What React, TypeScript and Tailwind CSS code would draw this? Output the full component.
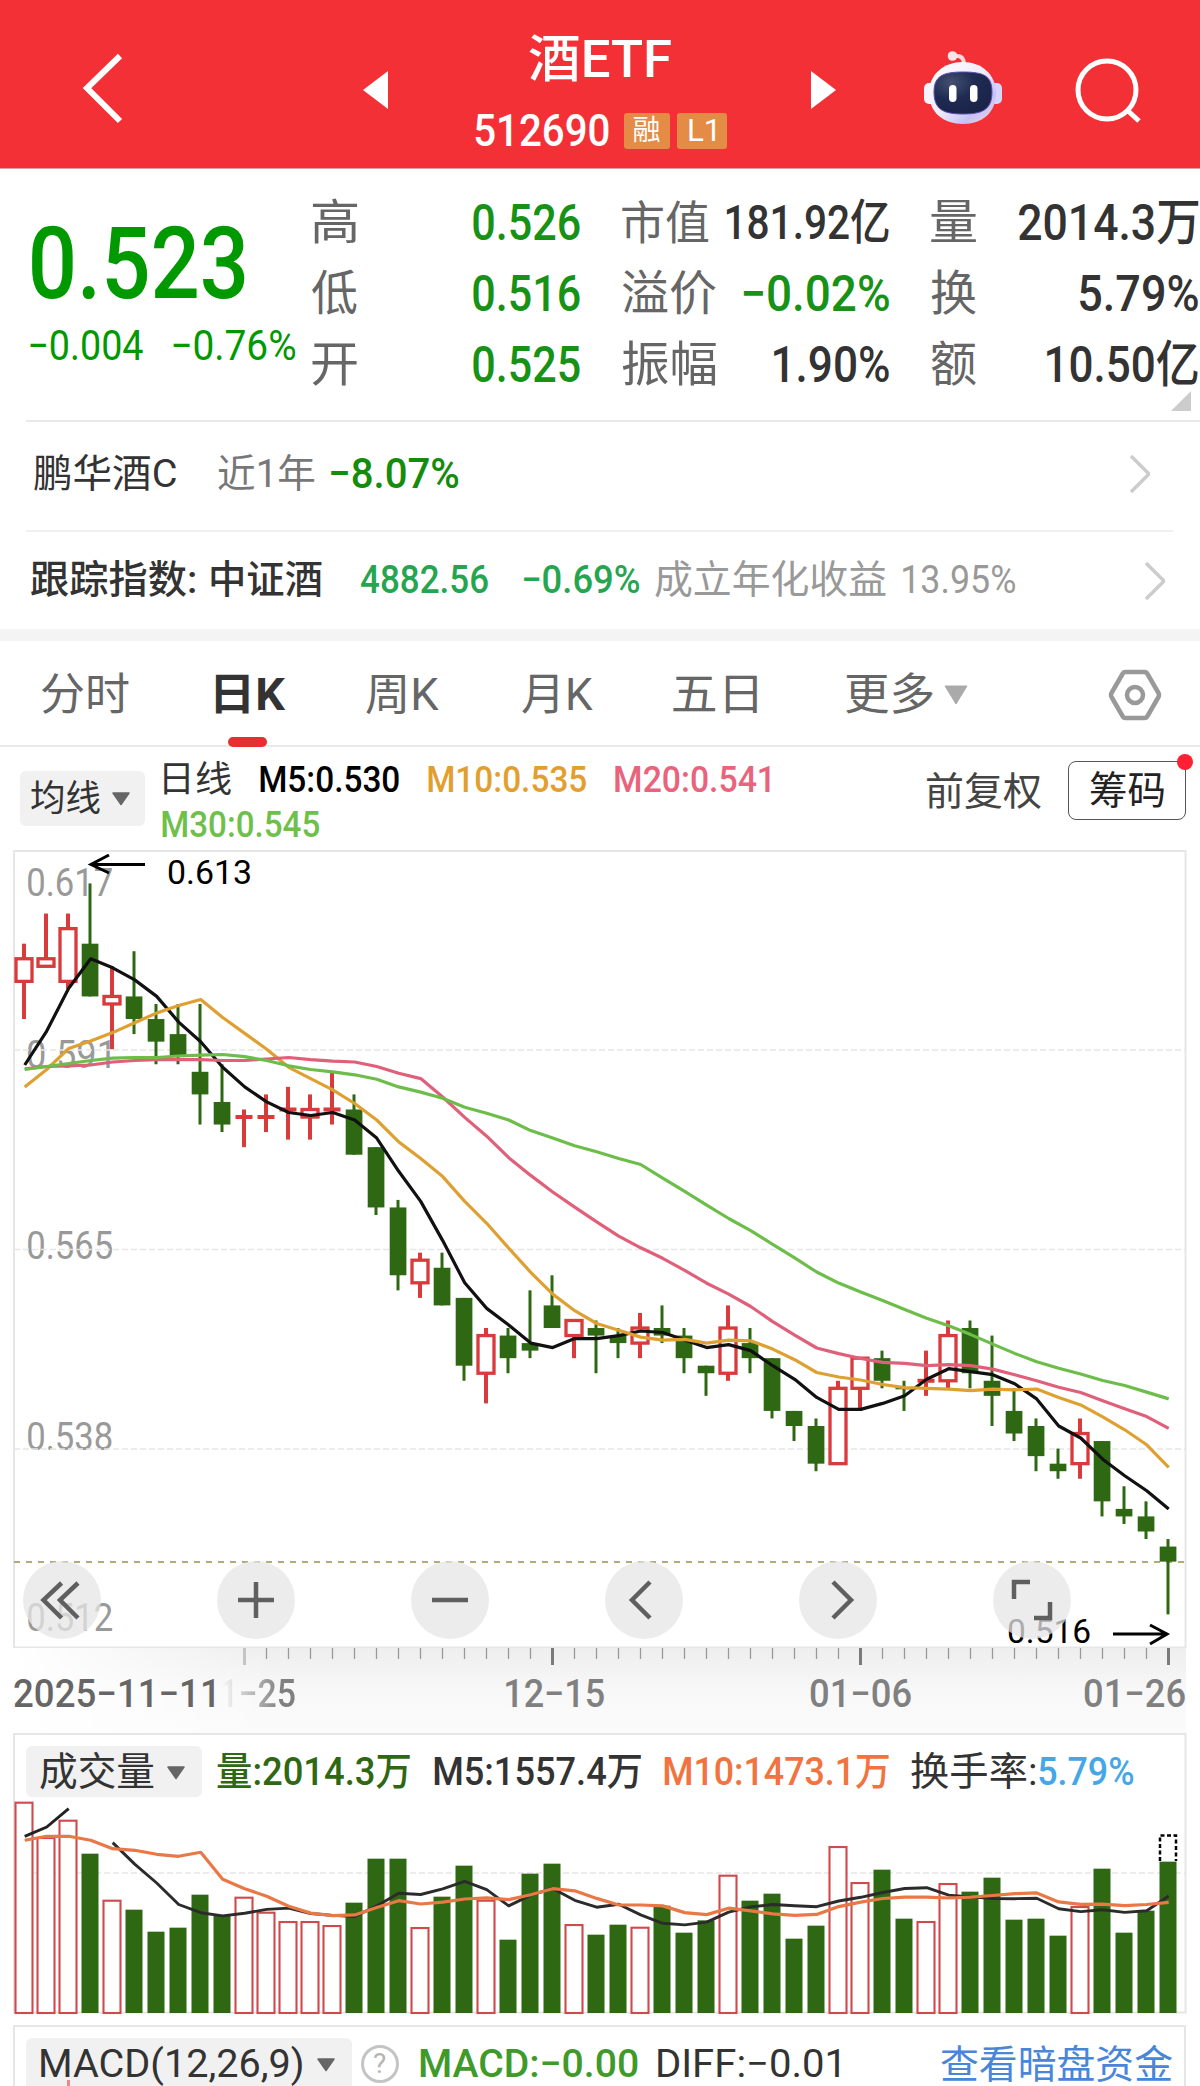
import { useLayoutEffect, useRef, useState } from 'react';

// 固定墨迹宽度的文本：按容器宽度横向压缩/拉伸字形
interface FitProps {
  text: string;
  className?: string;
}

function Fit({ text, className = '' }: FitProps) {
  const boxRef = useRef<HTMLSpanElement>(null);
  const [transform, setTransform] = useState('none');

  useLayoutEffect(() => {
    const box = boxRef.current;
    const ctx = document.createElement('canvas').getContext('2d');
    if (!box || !ctx) return;
    const cs = getComputedStyle(box);
    ctx.font = `${cs.fontWeight} ${cs.fontSize} ${cs.fontFamily}`;
    const m = ctx.measureText(text);
    const ink = m.actualBoundingBoxLeft + m.actualBoundingBoxRight;
    if (ink > 0) {
      setTransform(`scaleX(${box.clientWidth / ink}) translateX(${m.actualBoundingBoxLeft}px)`);
    }
  }, [text]);

  return (
    <span ref={boxRef} className={`block shrink-0 whitespace-nowrap leading-none ${className}`}>
      <span className="inline-block origin-left" style={{ transform }}>
        {text}
      </span>
    </span>
  );
}

// K线数据 [开, 收, 高, 低]，单位 0.001；open === close 时由 up 决定颜色
type Candle = [number, number, number, number, ('up' | 'down')?];

const CANDLES: Candle[] = [
  [600, 603, 605, 595], [602, 603, 609, 602], [600, 607, 609, 599], [605, 598, 613, 598],
  [597, 598, 602, 591], [598, 595, 604, 593], [595, 592, 597, 589], [593, 590, 597, 589],
  [588, 585, 597, 581], [584, 581, 589, 580], [582, 582, 583, 578, 'up'], [582, 582, 585, 580, 'up'],
  [583, 583, 586, 579, 'up'], [582, 583, 585, 579], [583, 583, 588, 581, 'up'], [583, 577, 585, 577],
  [578, 570, 578, 569], [570, 561, 571, 559], [560, 563, 564, 558], [562, 557, 564, 557],
  [558, 549, 558, 547], [548, 553, 554, 544], [553, 550, 554, 548], [552, 551, 559, 550],
  [557, 554, 561, 554], [553, 555, 555, 550], [554, 553, 555, 548], [553, 552, 554, 550],
  [552, 554, 556, 550], [554, 553, 557, 552], [553, 550, 554, 548], [549, 548, 549, 545],
  [548, 554, 557, 547], [552, 550, 554, 548], [550, 543, 550, 542], [543, 541, 543, 539],
  [541, 536, 542, 535], [536, 546, 547, 536], [546, 550, 550, 543], [550, 547, 551, 546],
  [546, 546, 547, 543, 'down'], [547, 547, 551, 545, 'up'], [547, 553, 555, 546], [554, 548, 555, 546],
  [547, 545, 553, 541], [543, 540, 546, 539], [541, 537, 542, 535], [536, 535, 538, 534],
  [536, 540, 542, 534], [539, 531, 539, 529], [530, 529, 533, 528], [529, 527, 531, 526],
  [525, 523, 526, 516],
];

// 成交量（相对单位）
const VOLUMES = [
  633, 527, 579, 478, 339, 310, 244, 256, 355, 292, 348, 303, 275, 275, 263, 331, 463, 463, 257, 349,
  442, 339, 220, 418, 448, 266, 235, 265, 258, 322, 241, 278, 414, 337, 358, 223, 262, 500, 392, 430,
  283, 275, 389, 364, 406, 280, 283, 232, 320, 433, 241, 307, 454,
];

// 窗口左侧以外的数据不在列表里，均线前段直接给值
const M5_HEAD = [588.9, 593.4, 599.1, 603];
const M10_HEAD = [586, 588.3, 591.1, 592.1, 593.2, 594.5, 595.8, 596.8, 597.6];
const M20_HEAD = [
  588.4, 588.7, 588.8, 588.9, 589.3, 589.5, 589.6, 589.6, 589.6, 589.5, 589.5, 589.7, 589.9, 589.6,
  589.4, 589.3, 588.7, 587.8, 587.1,
];
const M30_HEAD = [
  588.3, 588.7, 589.1, 589.5, 589.8, 589.9, 589.9, 590.1, 590.2, 590.3, 590, 589.5, 588.8, 588.3,
  588, 587.6, 587, 586, 585.3, 584.5, 583.3, 582.5, 581.6, 580.2, 579.2, 578.2, 577.4, 576.5, 575.7,
];
const VOL_M10_HEAD = [518, 530, 530, 518, 493, 488, 476, 470, 482];

const candleX = (i: number) => 24 + i * 22;
const priceY = (p: number) => 32.4 + (613 - p) * 7.536;
const volY = (v: number) => 280 - v / 3;

function movingAverage(values: number[], n: number, head: number[]) {
  return values.map((_, i) => {
    if (i < n - 1) return head[i];
    let sum = 0;
    for (let k = i - n + 1; k <= i; k++) sum += values[k];
    return sum / n;
  });
}

function toPoints(values: number[], y: (v: number) => number, offset = 0) {
  return values.map((v, i) => `${candleX(i + offset) + 0.7},${y(v).toFixed(1)}`).join(' ');
}

const isUp = (c: Candle) => (c[4] ? c[4] === 'up' : c[1] > c[0]);
const CLOSES = CANDLES.map((c) => c[1]);
const VOL_M5 = movingAverage(VOLUMES, 5, [530, 558, 613, 613]);

const MA_LINES = [
  { color: '#111111', values: movingAverage(CLOSES, 5, M5_HEAD) },
  { color: '#dfa032', values: movingAverage(CLOSES, 10, M10_HEAD) },
  { color: '#e0607a', values: movingAverage(CLOSES, 20, M20_HEAD) },
  { color: '#6dbd4a', values: movingAverage(CLOSES, 30, M30_HEAD) },
];

function Caret({ className = '' }: { className?: string }) {
  return (
    <svg viewBox="0 0 20 14" className={`h-[14px] w-5 shrink-0 ${className}`}>
      <path d="M2 1H18L10 12.5Z" fill="currentColor" stroke="currentColor" strokeWidth="1.5" strokeLinejoin="round" />
    </svg>
  );
}

function Arrow({ className = '' }: { className?: string }) {
  return (
    <svg viewBox="0 0 20 38" className={`h-[38px] w-5 shrink-0 ${className}`} fill="none" stroke="#cccccc" strokeWidth="3.500">
      <path d="M1 1L19 19L1 37" />
    </svg>
  );
}

function RobotIcon() {
  return (
    <svg viewBox="0 0 78 74" className="h-[74px] w-[78px]">
      <defs>
        <linearGradient id="shell" x1="0" y1="0" x2="1" y2="1">
          <stop offset="0" stopColor="#ffffff" />
          <stop offset="0.5" stopColor="#efebfb" />
          <stop offset="0.75" stopColor="#c3c2f8" />
          <stop offset="1" stopColor="#f8d3da" />
        </linearGradient>
        <radialGradient id="visor" cx="0.3" cy="0.25" r="0.8">
          <stop offset="0" stopColor="#43506f" />
          <stop offset="0.5" stopColor="#1f2b52" />
          <stop offset="1" stopColor="#1a2348" />
        </radialGradient>
      </defs>
      <path d="M28 6Q40 2 40 14" fill="none" stroke="#fbd9dd" strokeWidth="4" />
      <circle cx="28.500" cy="5" r="4.800" fill="#fde4e8" />
      <rect x="0" y="32" width="12" height="21" rx="5" fill="#f5f2fc" />
      <rect x="66" y="32" width="12" height="21" rx="5" fill="#d5d5fb" />
      <path d="M39 11C57 11 72 23 72 42C72 62 58 73 39 73C20 73 5 62 5 42C5 23 20 11 39 11Z" fill="url(#shell)" />
      <path d="M39 21C60 21 68 25 68 41C68 59 58 63 39 63C20 63 10 59 10 41C10 25 19 21 39 21Z" fill="url(#visor)" stroke="#5a4bb5" strokeWidth="1" />
      <rect x="25" y="34" width="7.500" height="17" rx="3.700" fill="#fff" />
      <rect x="46" y="34" width="7.500" height="17" rx="3.700" fill="#fff" />
    </svg>
  );
}

function Header() {
  return (
    <header className="flex h-[168px] items-start bg-[#f33035] text-white">
      <svg viewBox="0 0 44 72" className="mt-[52px] ml-20 h-[72px] w-11" fill="none" stroke="#fff" strokeWidth="6">
        <path d="M40 4L7 36L40 69" />
      </svg>
      <svg viewBox="0 0 25 38" className="mt-[71px] ml-[239px] h-[38px] w-[25px]">
        <path d="M25 0V38L0 19Z" fill="#fff" />
      </svg>
      <div className="ml-[86px] flex w-[253px] flex-col items-start">
        <Fit text="酒ETF" className="mt-[34px] ml-[55px] w-[142px] text-[51px] font-medium" />
        <div className="mt-[23px] flex items-center">
          <Fit text="512690" className="ml-px w-[134px] text-[45px] font-medium" />
          <div className="ml-[15px] flex h-9 w-[46px] items-center justify-center rounded-[3px] bg-[#e48b45]">
            <Fit text="融" className="w-[27px] text-[28px]" />
          </div>
          <div className="ml-[7px] flex h-9 w-[50px] items-center justify-center rounded-[3px] bg-[#e48b45]">
            <Fit text="L1" className="w-[27px] text-[31px]" />
          </div>
        </div>
      </div>
      <svg viewBox="0 0 25 38" className="mt-[71px] ml-[84px] h-[38px] w-[25px]">
        <path d="M0 0V38L25 19Z" fill="#fff" />
      </svg>
      <div className="mt-[51px] ml-[88px]">
        <RobotIcon />
      </div>
      <svg viewBox="0 0 70 70" className="mt-[56px] ml-[71px] h-[70px] w-[70px]" fill="none" stroke="#fff" strokeWidth="5">
        <circle cx="34" cy="34" r="29" />
        <path d="M54 54L66 65" />
      </svg>
    </header>
  );
}

function QuotePanel() {
  return (
    <section className="relative flex h-[252px] border-t border-[#d9a0a0] pt-[18px] text-[50px] font-medium text-[#333]">
      <div className="w-[312px] pt-[27px] text-[#009900]">
        <Fit text="0.523" className="ml-8 w-[213px] text-[100px]" />
        <div className="mt-[11px] flex text-[42px] font-normal">
          <Fit text="−0.004" className="ml-[30px] w-[113px]" />
          <Fit text="−0.76%" className="ml-[30px] w-[122px]" />
        </div>
      </div>
      <div className="w-[268px]">
        <div className="flex h-[71px] items-center justify-between">
          <Fit text="高" className="w-[45px] text-[48px] font-normal text-[#666]" />
          <Fit text="0.526" className="w-[107px] text-[#179217]" />
        </div>
        <div className="flex h-[71px] items-center justify-between">
          <Fit text="低" className="w-[45px] text-[48px] font-normal text-[#666]" />
          <Fit text="0.516" className="w-[107px] text-[#179217]" />
        </div>
        <div className="flex h-[71px] items-center justify-between">
          <Fit text="开" className="w-[45px] text-[48px] font-normal text-[#666]" />
          <Fit text="0.525" className="w-[107px] text-[#179217]" />
        </div>
      </div>
      <div className="ml-[42px] w-[267px]">
        <div className="flex h-[71px] items-center justify-between">
          <Fit text="市值" className="w-[87px] text-[46px] font-normal text-[#666]" />
          <Fit text="181.92亿" className="w-[163px] text-[48px]" />
        </div>
        <div className="flex h-[71px] items-center justify-between">
          <Fit text="溢价" className="w-[94px] text-[48px] font-normal text-[#666]" />
          <Fit text="−0.02%" className="w-[146px] text-[#179217]" />
        </div>
        <div className="flex h-[71px] items-center justify-between">
          <Fit text="振幅" className="w-[94px] text-[48px] font-normal text-[#666]" />
          <Fit text="1.90%" className="w-[115px]" />
        </div>
      </div>
      <div className="ml-[42px] w-[267px]">
        <div className="flex h-[71px] items-center justify-between">
          <Fit text="量" className="w-[45px] text-[48px] font-normal text-[#666]" />
          <Fit text="2014.3万" className="w-[179px]" />
        </div>
        <div className="flex h-[71px] items-center justify-between">
          <Fit text="换" className="w-[45px] text-[48px] font-normal text-[#666]" />
          <Fit text="5.79%" className="w-[118px]" />
        </div>
        <div className="flex h-[71px] items-center justify-between">
          <Fit text="额" className="w-[45px] text-[48px] font-normal text-[#666]" />
          <Fit text="10.50亿" className="w-[151px]" />
        </div>
      </div>
      <svg viewBox="0 0 20 20" className="absolute right-[9px] bottom-[9px] h-5 w-5">
        <path d="M20 0V20H0Z" fill="#cccccc" />
      </svg>
    </section>
  );
}

function FundRows() {
  return (
    <section>
      <div className="ml-[26px] border-t-2 border-[#e9e9e9]" />
      <div className="flex h-[108px] items-center pb-1">
        <Fit text="鹏华酒C" className="ml-[34px] w-[142px] text-[39px] text-[#333]" />
        <Fit text="近1年" className="ml-[42px] w-[97px] text-[39px] text-[#777]" />
        <Fit text="−8.07%" className="ml-4 w-[128px] text-[42px] font-medium text-[#158c0b]" />
        <Arrow className="ml-[671px]" />
      </div>
      <div className="mr-[27px] ml-[26px] border-t-2 border-[#f0f0f0]" />
      <div className="flex h-[97px] items-center">
        <Fit text="跟踪指数:" className="ml-[31px] w-[164px] text-[39px] font-medium text-[#333]" />
        <Fit text="中证酒" className="ml-[16px] w-[111px] text-[39px] font-medium text-[#333]" />
        <Fit text="4882.56" className="ml-[39px] w-[127px] text-[39px] font-medium text-[#26a550]" />
        <Fit text="−0.69%" className="ml-[35px] w-[116px] text-[39px] font-medium text-[#26a550]" />
        <Fit text="成立年化收益" className="ml-[16px] w-[231px] text-[39px] text-[#999]" />
        <Fit text="13.95%" className="ml-[17px] w-[112px] text-[39px] text-[#999]" />
        <Arrow className="ml-[130px]" />
      </div>
      <div className="h-3 bg-[#f4f4f4]" />
    </section>
  );
}

function PeriodTabs() {
  return (
    <nav className="flex h-[106px] items-center border-b-2 border-[#e9e9e9] pt-[3px] text-[44px] text-[#666]">
      <Fit text="分时" className="ml-[41px] w-[88px]" />
      <div className="relative ml-[86px]">
        <Fit text="日K" className="w-[71px] font-bold text-[#333]" />
        <div className="absolute top-[64px] left-[13px] h-[10px] w-[39px] rounded-full bg-[#e43030]" />
      </div>
      <Fit text="周K" className="ml-20 w-[73px]" />
      <Fit text="月K" className="ml-[83px] w-[71px]" />
      <Fit text="五日" className="ml-20 w-[84px]" />
      <Fit text="更多" className="ml-[89px] w-[87px]" />
      <svg viewBox="0 0 24 20" className="ml-[11px] h-5 w-6">
        <path d="M1 1H23L12 19Z" fill="#aaaaaa" stroke="#aaaaaa" strokeLinejoin="round" />
      </svg>
      <svg viewBox="0 0 54 52" className="ml-[140px] h-[52px] w-[54px]" fill="none" stroke="#999999" strokeWidth="4.500" strokeLinejoin="round">
        <path d="M17.500 3H36.500Q38.500 3 39.500 5L50.500 24Q51.500 26 50.500 28L39.500 47Q38.500 49 36.500 49H17.500Q15.500 49 14.500 47L3.500 28Q2.500 26 3.500 24L14.500 5Q15.500 3 17.500 3Z" />
        <circle cx="27" cy="26" r="8" />
      </svg>
    </nav>
  );
}

function AverageBar() {
  return (
    <div className="flex h-[103px] items-start text-[36px]">
      <div className="mt-6 ml-5 flex h-[55px] w-[125px] items-center rounded-md bg-[#f1f1f1] pt-px">
        <Fit text="均线" className="ml-[11px] w-[69px] text-[36px] text-[#333]" />
        <Caret className="ml-[11px] text-[#666]" />
      </div>
      <div className="mt-[15px] ml-[19px] w-[763px]">
        <div className="flex items-center">
          <Fit text="日线" className="w-[67px] text-[36px] text-[#333]" />
          <Fit text="M5:0.530" className="ml-[29px] w-[139px] font-medium text-black" />
          <Fit text="M10:0.535" className="ml-[29px] w-[158px] font-medium text-[#e29f2f]" />
          <Fit text="M20:0.541" className="ml-[29px] w-[155px] font-medium text-[#e8637b]" />
        </div>
        <Fit text="M30:0.545" className="mt-[9px] ml-[-2px] w-[157px] font-medium text-[#6fbf4b]" />
      </div>
      <Fit text="前复权" className="mt-[26px] w-[114px] text-[39px] text-[#444]" />
      <div className="relative mt-[14px] ml-[27px] flex h-[59px] w-[118px] items-center justify-center rounded-lg border-[1.5px] border-[#555] pt-[2px]">
        <Fit text="筹码" className="w-[74px] text-[39px] text-[#222]" />
        <div className="absolute -top-[8px] -right-[8px] h-4 w-4 rounded-full bg-[#ff2033]" />
      </div>
    </div>
  );
}

// 图表上的圆形操作按钮
const CHART_TOOLS = [
  'M38.600 22L20.500 39L38.600 57M55 22L37 39L55 57',
  'M21 39H57M39 21V57',
  'M21 39H57',
  'M45 21L27 39L45 57',
  'M34 21L52 39L34 57',
  'M21 38V21H37M57 41V57H41',
];

function PriceChart() {
  return (
    <section className="relative h-[798px]">
      <div className="absolute top-[20px] left-7 text-[38px] text-[#999]">
        <Fit text="0.617" className="mt-[-6px] w-[84px]" />
        <Fit text="0.591" className="mt-[134px] w-[82px]" />
        <Fit text="0.565" className="mt-[153px] w-[84px]" />
        <Fit text="0.538" className="mt-[153px] w-[84px]" />
        <Fit text="0.512" className="mt-[143px] w-[84px]" />
      </div>
      <svg viewBox="0 -1 1200 798" className="absolute inset-0 h-[798px] w-[1200px]" fill="none">
        <rect x="14" y="0" width="1171.500" height="796.500" stroke="#e6e6e6" strokeWidth="2" />
        {[199, 398.500, 598].map((y) => (
          <line key={y} x1="14" x2="1185" y1={y} y2={y} stroke="#e6e6e6" strokeWidth="1.500" strokeDasharray="6 3" />
        ))}
        <line x1="14" x2="1185" y1="711" y2="711" stroke="#b3aa7c" strokeWidth="2" strokeDasharray="6 6" />
        {CANDLES.map((c, i) => {
          const x = candleX(i);
          const up = isUp(c);
          const top = priceY(Math.max(c[0], c[1]));
          const bottom = priceY(Math.min(c[0], c[1]));
          const color = up ? '#d93a3c' : '#2f6813';
          return (
            <g key={i} stroke={color}>
              <line x1={x} x2={x} y1={priceY(c[2])} y2={priceY(c[3])} strokeWidth={up ? 4 : 3} />
              {c[0] === c[1] ? (
                <line x1={x - 8.5} x2={x + 8.5} y1={top} y2={top} strokeWidth={up ? 4 : 2} />
              ) : up ? (
                <rect x={x - 8} y={top} width="16" height={bottom - top} strokeWidth="3.300" fill="#fff" />
              ) : (
                <rect x={x - 8.3} y={top} width="16.700" height={bottom - top} stroke="none" fill={color} />
              )}
            </g>
          );
        })}
        {MA_LINES.map((line) => (
          <polyline key={line.color} points={toPoints(line.values, priceY)} stroke={line.color} strokeWidth="3.200" strokeLinejoin="round" />
        ))}
        <g stroke="#000" strokeWidth="3">
          <path d="M145 13.500H92M109 4L91 13.500L109 22" />
          <path d="M1113 783H1166M1150 774L1167 783L1150 793" />
        </g>
      </svg>
      <Fit text="0.613" className="absolute top-[5px] left-[168px] w-[82px] text-[34px] text-black" />
      <Fit text="0.516" className="absolute top-[764px] left-[1008px] w-[82px] text-[34px] text-black" />
      <div className="absolute top-[711px] left-[23px] flex gap-[116px]">
        {CHART_TOOLS.map((d) => (
          <svg key={d} viewBox="0 0 78 78" className="h-[78px] w-[78px]" fill="none">
            <circle cx="39" cy="39" r="39" fill="#e6e6e6" fillOpacity="0.75" />
            <path d={d} stroke="#5f5f5f" strokeWidth="4.500" />
          </svg>
        ))}
      </div>
    </section>
  );
}

function DateAxis() {
  return (
    <div className="relative h-[85px]">
      <div className="absolute inset-y-0 right-[14px] left-[14px] bg-linear-to-b from-[#eeeeee] via-[#f8f8f8] to-[#fbfbfb] [mask-image:linear-gradient(to_right,transparent,black_22%)]" />
      <svg viewBox="0 0 1200 18" className="relative block h-[18px] w-[1200px]">
        {CANDLES.map((_, i) => {
          if (i < 10) return null;
          const major = (i - 10) % 14 === 0;
          return (
            <line
              key={i}
              x1={candleX(i) + 0.5}
              x2={candleX(i) + 0.5}
              y1="0"
              y2={major ? 17 : 11}
              stroke={i === 10 ? '#c4c4c4' : major ? '#7a7a7a' : '#999999'}
              strokeWidth={major ? 3 : 1.3}
            />
          );
        })}
      </svg>
      <div className="relative mt-[9px] flex text-[39px] font-medium text-[#808080]">
        <Fit text="2025−11−11" className="ml-[14px] w-[200px] text-[#666]" />
        <Fit text="1−25" className="ml-[8px] w-[73px] [mask-image:linear-gradient(to_right,transparent,black_80%)]" />
        <Fit text="12−15" className="ml-[211px] w-[98px]" />
        <Fit text="01−06" className="ml-[206px] w-[101px]" />
        <Fit text="01−26" className="ml-[173px] w-[101px]" />
      </div>
    </div>
  );
}

function VolumePanel() {
  return (
    <section className="relative h-[292px]">
      <svg viewBox="0 0 1200 292" className="absolute inset-0 h-[292px] w-[1200px]" fill="none">
        <path d="M14 280V1H1185.500V279.500H14" stroke="#e6e6e6" strokeWidth="2" />
        <line x1="14" x2="1185" y1="140" y2="140" stroke="#e6e6e6" strokeWidth="1.500" strokeDasharray="6 3" />
        {VOLUMES.map((v, i) => {
          const x = candleX(i);
          const y = volY(v);
          return isUp(CANDLES[i]) ? (
            <rect key={i} x={x - 8.5} y={y + 0.7} width="17" height={279.3 - y} stroke="#cf4a4c" strokeWidth="2.100" fill="#fff" />
          ) : (
            <rect key={i} x={x - 8.5} y={y} width="17" height={280 - y} fill="#2f6813" />
          );
        })}
        <path d="M1160 128V102.500H1176V128" stroke="#000" strokeWidth="2.500" strokeDasharray="4 2.500" />
        <polyline points={toPoints(VOL_M5.slice(0, 3), volY)} stroke="#222" strokeWidth="2.900" />
        <polyline points={toPoints(VOL_M5.slice(4), volY, 4)} stroke="#2b2b2b" strokeWidth="2.900" strokeLinejoin="round" />
        <polyline points={toPoints(movingAverage(VOLUMES, 10, VOL_M10_HEAD), volY)} stroke="#e87845" strokeWidth="3.200" strokeLinejoin="round" />
      </svg>
      <div className="relative flex items-center pt-[13px] text-[39px] text-[#333]">
        <div className="ml-[26px] flex h-[51px] w-[176px] items-center rounded-md bg-[#f1f1f1] pt-[2px]">
          <Fit text="成交量" className="ml-[14px] w-[114px]" />
          <Caret className="ml-3 text-[#666]" />
        </div>
        <Fit text="量:2014.3万" className="mt-[2px] ml-[15px] w-[193px] font-medium text-[#2f6813]" />
        <Fit text="M5:1557.4万" className="mt-[2px] ml-6 w-[207px] font-medium" />
        <Fit text="M10:1473.1万" className="mt-[2px] ml-[23px] w-[225px] font-medium text-[#f07340]" />
        <Fit text="换手率:" className="mt-[2px] ml-[22px] w-[124px]" />
        <Fit text="5.79%" className="mt-[2px] ml-[4px] w-[94px] font-medium text-[#45a6e8]" />
      </div>
    </section>
  );
}

function MacdPanel() {
  return (
    <section className="relative ml-[13px] h-[61px] w-[1173px] overflow-hidden border-x-2 border-t-2 border-[#e6e6e6]">
      <div className="flex items-center pt-[11px] text-[39px] text-[#333]">
        <div className="ml-[11px] flex h-[52px] w-[326px] items-center rounded-md bg-[#f1f1f1] pt-px">
          <Fit text="MACD(12,26,9)" className="ml-[15px] w-[261px]" />
          <Caret className="ml-[14px] text-[#666]" />
        </div>
        <div className="ml-[9px] flex h-[38px] w-[38px] items-center justify-center rounded-full border-[3px] border-[#c4c4c4] text-[28px] text-[#b5b5b5]">
          <Fit text="?" className="w-[12px]" />
        </div>
        <Fit text="MACD:−0.00" className="mt-px ml-[21px] w-[218px] font-medium text-[#3f9a2a]" />
        <Fit text="DIFF:−0.01" className="mt-px ml-5 w-[181px]" />
        <Fit text="查看暗盘资金" className="mt-[2px] ml-[102px] w-[231px] text-[#4a86d8]" />
      </div>
      <div className="absolute top-[53px] left-[52px] h-2 w-[3px] bg-[#e88a8a]" />
    </section>
  );
}

export default function App() {
  return (
    <div className="h-[2086px] w-[1200px] overflow-hidden bg-white font-[Roboto,'Noto_Sans_CJK_SC',sans-serif]">
      <Header />
      <QuotePanel />
      <FundRows />
      <PeriodTabs />
      <AverageBar />
      <PriceChart />
      <DateAxis />
      <VolumePanel />
      <MacdPanel />
    </div>
  );
}
